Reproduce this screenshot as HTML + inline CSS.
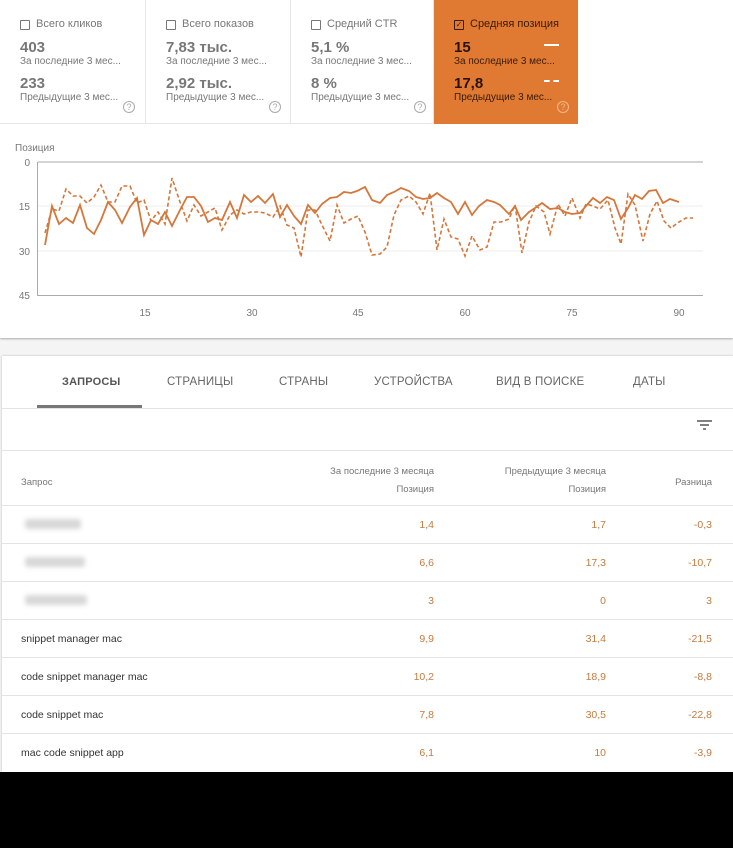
<!DOCTYPE html>
<html><head><meta charset="utf-8">
<style>
*{margin:0;padding:0;box-sizing:border-box}
body{width:733px;height:848px;background:#000;font-family:"Liberation Sans",sans-serif;position:relative;overflow:hidden}
.a{position:absolute}
#top{left:0;top:0;width:733px;height:338px;background:#fff;box-shadow:0 1px 2px rgba(0,0,0,.3)}
#bg{left:0;top:338px;width:733px;height:434px;background:#f4f4f4}
#bot{left:2px;top:356px;width:731px;height:416px;background:#fff;box-shadow:0 0 2px rgba(0,0,0,.25)}
.card{position:absolute;top:0;height:124px;border-right:1px solid #e6e6e6;border-bottom:1px solid #e6e6e6;color:#777}
.cb{position:absolute;left:20px;top:20px;width:10px;height:10px;border:1px solid #777;border-radius:1px}
.lab{position:absolute;left:36px;top:18px;font-size:11px}
.v1{position:absolute;left:20px;top:39px;font-size:15px;font-weight:bold}
.s1{position:absolute;left:20px;top:56px;font-size:10px}
.v2{position:absolute;left:20px;top:75px;font-size:15px;font-weight:bold}
.s2{position:absolute;left:20px;top:92px;font-size:10px}
.q{position:absolute;left:123px;top:101px;width:12px;height:12px;border:1px solid #aaa;border-radius:50%;font-size:9px;text-align:center;line-height:10px;color:#aaa}
.tab{position:absolute;top:376px;font-size:11.5px;color:#666;letter-spacing:.2px}
.row{position:absolute;left:2px;width:731px;height:38px;border-top:1px solid #e4e4e4;font-size:10.5px}
.row span{position:absolute;top:13px}
.n{color:#c47a3e}
.c1{right:299px}.c2{right:127px}.c3{right:21px}
.blur{position:absolute;left:18px;width:160px;height:36px;background:#fff;}
.blur i{position:absolute;left:5px;top:12px;height:10px;background:#d8d8d8;filter:blur(2.5px);border-radius:3px}
</style></head><body>
<div id="bg" class="a"></div>
<div id="top" class="a">
 <div class="card" style="left:0;width:146px"><div class="cb"></div><div class="lab">Всего кликов</div><div class="v1">403</div><div class="s1">За последние 3 мес...</div><div class="v2">233</div><div class="s2">Предыдущие 3 мес...</div><div class="q">?</div></div>
 <div class="card" style="left:146px;width:145px"><div class="cb"></div><div class="lab">Всего показов</div><div class="v1">7,83 тыс.</div><div class="s1">За последние 3 мес...</div><div class="v2">2,92 тыс.</div><div class="s2">Предыдущие 3 мес...</div><div class="q">?</div></div>
 <div class="card" style="left:291px;width:143px"><div class="cb"></div><div class="lab">Средний CTR</div><div class="v1">5,1 %</div><div class="s1">За последние 3 мес...</div><div class="v2">8 %</div><div class="s2">Предыдущие 3 мес...</div><div class="q">?</div></div>
 <div class="card" style="left:434px;width:144px;background:#e07a32;color:#3a1a08;border:none"><div class="cb" style="border-color:#3a1a08;font-size:8px;line-height:8px;text-align:center;color:#3a1a08">✓</div><div class="lab" style="color:#3a1a08">Средняя позиция</div><div class="v1" style="color:#2b1205">15</div><div class="s1" style="color:#3a1a08">За последние 3 мес...</div><div class="v2" style="color:#2b1205">17,8</div><div class="s2" style="color:#3a1a08">Предыдущие 3 мес...</div>
  <div class="a" style="left:110px;top:44px;width:15px;height:2px;background:#fff"></div>
  <div class="a" style="left:110px;top:80px;width:15px;height:0;border-top:2px dashed #fff"></div>
  <div class="q" style="border-color:#f5b78a;color:#f5b78a">?</div></div>
 <svg class="a" style="left:0;top:0" width="733" height="338" font-family="Liberation Sans" font-size="10" fill="#777">
  <text x="15" y="151">Позиция</text>
  <line x1="38" y1="162" x2="703" y2="162" stroke="#aaa"/>
  <line x1="38" y1="206" x2="703" y2="206" stroke="#eee"/>
  <line x1="38" y1="251" x2="703" y2="251" stroke="#eee"/>
  <line x1="38" y1="295.5" x2="703" y2="295.5" stroke="#aaa"/>
  <line x1="37.5" y1="162" x2="37.5" y2="296" stroke="#aaa"/>
  <text x="30" y="166" text-anchor="end">0</text><text x="30" y="210" text-anchor="end">15</text><text x="30" y="255" text-anchor="end">30</text><text x="30" y="299" text-anchor="end">45</text>
  <text x="145" y="316" text-anchor="middle">15</text><text x="252" y="316" text-anchor="middle">30</text><text x="358" y="316" text-anchor="middle">45</text><text x="465" y="316" text-anchor="middle">60</text><text x="572" y="316" text-anchor="middle">75</text><text x="679" y="316" text-anchor="middle">90</text>
  <polyline fill="none" stroke="#d4773a" stroke-width="1.6" stroke-dasharray="4,2.5" points="45,233 52,209 59,211 66,189 73,196 80,196 87,203 94,197 101,185 108,202 115,202 122,186 130,186 137,203 144,200 151,221 158,212 165,224 172,178 180,202 187,221 194,205 201,216 208,212 215,208 222,230 230,215 237,210 244,214 251,212 258,212 265,213 273,217 280,206 287,225 294,228 301,257 308,210 315,210 322,225 330,241 337,205 344,223 351,219 358,216 365,232 372,255 380,254 387,247 394,215 401,200 409,196 416,202 423,214 430,193 437,250 444,219 451,237 458,239 465,256 472,236 480,250 487,247 494,222 501,222 509,219 515,205 522,253 529,222 536,206 544,212 550,234 558,204 565,216 572,198 580,218 586,204 593,206 600,209 608,200 615,228 621,244 628,194 635,205 643,241 650,214 657,201 664,221 671,228 679,222 686,218 693,218"/>
  <polyline fill="none" stroke="#d4773a" stroke-width="1.8" points="45,245 52,206 59,224 66,218 73,223 80,205 87,228 94,234 101,220 108,202 115,210 122,223 130,207 137,198 144,235 151,220 158,224 165,212 172,226 180,210 187,197 194,197 201,206 208,222 215,218 222,220 230,202 237,218 244,195 251,202 258,196 265,203 273,194 280,217 287,205 294,216 301,224 308,205 315,213 322,204 330,198 337,197 344,192 351,193 357,191 365,187 372,200 380,203 387,195 394,192 401,188 409,191 416,197 423,199 430,198 437,193 444,198 451,202 458,214 465,202 472,215 479,206 487,200 494,202 500,205 509,214 515,206 521,220 529,212 535,208 542,203 550,209 558,208 565,212 572,214 580,213 586,206 593,198 600,203 607,197 614,200 621,219 628,208 635,195 642,199 649,191 656,190 663,203 670,199 679,202"/>
 </svg>
</div>
<div id="bot" class="a"></div>
<div class="tab" style="left:62px;color:#555;font-weight:bold;font-size:11px">ЗАПРОСЫ</div>
<div class="tab" style="left:167px">СТРАНИЦЫ</div>
<div class="tab" style="left:279px">СТРАНЫ</div>
<div class="tab" style="left:374px">УСТРОЙСТВА</div>
<div class="tab" style="left:496px">ВИД В ПОИСКЕ</div>
<div class="tab" style="left:633px">ДАТЫ</div>
<div class="a" style="left:37px;top:405px;width:105px;height:3px;background:#777"></div>
<div class="a" style="left:2px;top:408px;width:731px;height:1px;background:#e4e4e4"></div>
<svg class="a" style="left:697px;top:420px" width="16" height="12"><g stroke="#555" stroke-width="1.5"><line x1="0" y1="1" x2="15" y2="1"/><line x1="3" y1="5" x2="12" y2="5"/><line x1="6" y1="9" x2="9" y2="9"/></g></svg>
<div class="a" style="left:2px;top:450px;width:731px;height:1px;background:#e4e4e4"></div>
<div class="a" style="left:21px;top:477px;font-size:9.5px;color:#777">Запрос</div>
<div class="a" style="right:299px;top:463px;font-size:9.5px;color:#777;text-align:right;line-height:18px">За последние 3 месяца<br>Позиция</div>
<div class="a" style="right:127px;top:463px;font-size:9.5px;color:#777;text-align:right;line-height:18px">Предыдущие 3 месяца<br>Позиция</div>
<div class="a" style="right:21px;top:477px;font-size:9.5px;color:#777">Разница</div>
<div class="row" style="top:505px"><div class="blur" style="top:1px"><i style="width:56px"></i></div><span class="n c1">1,4</span><span class="n c2">1,7</span><span class="n c3">-0,3</span></div>
<div class="row" style="top:543px"><div class="blur" style="top:1px"><i style="width:60px"></i></div><span class="n c1">6,6</span><span class="n c2">17,3</span><span class="n c3">-10,7</span></div>
<div class="row" style="top:581px"><div class="blur" style="top:1px"><i style="width:62px"></i></div><span class="n c1">3</span><span class="n c2">0</span><span class="n c3">3</span></div>
<div class="row" style="top:619px"><span style="left:19px;color:#333">snippet manager mac</span><span class="n c1">9,9</span><span class="n c2">31,4</span><span class="n c3">-21,5</span></div>
<div class="row" style="top:657px"><span style="left:19px;color:#333">code snippet manager mac</span><span class="n c1">10,2</span><span class="n c2">18,9</span><span class="n c3">-8,8</span></div>
<div class="row" style="top:695px"><span style="left:19px;color:#333">code snippet mac</span><span class="n c1">7,8</span><span class="n c2">30,5</span><span class="n c3">-22,8</span></div>
<div class="row" style="top:733px;height:39px"><span style="left:19px;color:#333">mac code snippet app</span><span class="n c1">6,1</span><span class="n c2">10</span><span class="n c3">-3,9</span></div>
</body></html>
